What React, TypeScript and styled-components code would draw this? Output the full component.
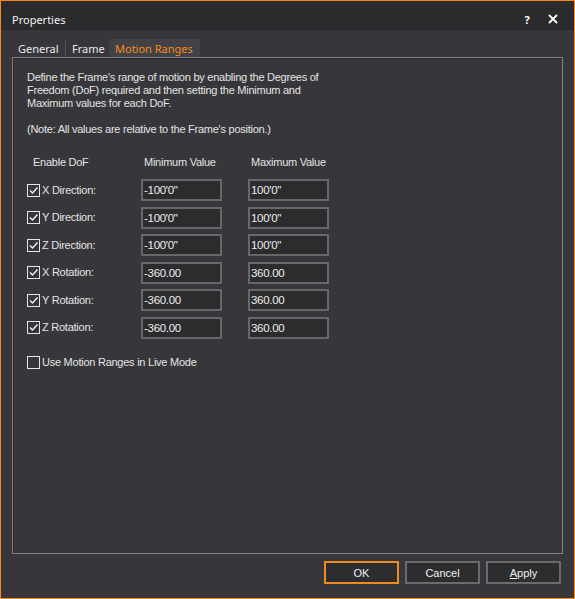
import React, { FC } from 'react';
import styled, { createGlobalStyle } from 'styled-components';

const GlobalStyle = createGlobalStyle`
  html, body {
    margin: 0;
    padding: 0;
    background: #37373b;
  }
  * {
    box-sizing: border-box;
  }
`;

const Window = styled.div`
  width: 575px;
  height: 599px;
  border: 1px solid #f58a1f;
  background: #37373b;
  display: flex;
  flex-direction: column;
  font-family: "Liberation Sans", Arial, sans-serif;
  color: #e4e4e4;
  user-select: none;
`;

const TitleBar = styled.div`
  height: 29px;
  flex: none;
  background: #2b2b2e;
  display: flex;
  align-items: center;
  padding: 7px 8px 0 11px;
  font-family: "Noto Sans", "Open Sans", sans-serif;
  font-size: 11px;
  color: #f2f2f2;
`;

const Title = styled.div`
  flex: 1;
`;

const TitleButton = styled.div`
  width: 26px;
  height: 20px;
  display: flex;
  align-items: center;
  justify-content: center;
  font-weight: bold;
  font-size: 11px;
  color: #ffffff;
`;

const Body = styled.div`
  flex: 1;
  display: flex;
  flex-direction: column;
  padding: 9px 11px 0 11px;
`;

const TabBar = styled.div`
  height: 18px;
  flex: none;
  display: flex;
  align-items: stretch;
  font-family: "Noto Sans", "Open Sans", sans-serif;
  font-size: 11px;
`;

const Tab = styled.div<{ $w: number; $active?: boolean; $sep?: boolean }>`
  width: ${(p) => p.$w}px;
  display: flex;
  align-items: center;
  padding-left: 6px;
  color: ${(p) => (p.$active ? '#f28c1e' : '#e8e8e8')};
  background: ${(p) => (p.$active ? '#414146' : 'transparent')};
  position: relative;
  ${(p) =>
    p.$sep
      ? `&::after {
    content: '';
    position: absolute;
    right: 0;
    top: 2px;
    bottom: 1px;
    width: 1px;
    background: #55555a;
  }`
      : ''}
`;

const Panel = styled.div`
  height: 497px;
  flex: none;
  border: 1px solid #808080;
  box-shadow: inset 1px 1px 0 #2a2a2d;
  padding: 13px 14px 0 14px;
  font-size: 11px;
  line-height: 13px;
  letter-spacing: -0.25px;
`;

const Intro = styled.p`
  margin: 0;
  width: 300px;
`;

const Note = styled.p`
  margin: 13px 0 0 0;
`;

const Grid = styled.div`
  display: grid;
  grid-template-columns: 88px 81px 81px;
  column-gap: 26px;
  row-gap: 5.6px;
  grid-auto-rows: 22px;
  margin-top: 10px;
`;

const HeaderRow = styled.div`
  display: grid;
  grid-template-columns: 88px 81px 81px;
  column-gap: 26px;
  margin-top: 20px;
`;

const HeadCell = styled.div<{ $pad: number }>`
  padding-left: ${(p) => p.$pad}px;
  white-space: nowrap;
`;

const CheckRow = styled.label`
  display: flex;
  align-items: center;
  gap: 2px;
  white-space: nowrap;
`;

const Box = styled.span`
  width: 13px;
  height: 13px;
  flex: none;
  border: 1px solid #e6e6e6;
  display: flex;
  align-items: center;
  justify-content: center;
`;

const Field = styled.div`
  border: 2px solid #68686b;
  background: #2c2c2f;
  color: #ececec;
  padding: 2px 0 0 1px;
  font-size: 11.5px;
  line-height: 15px;
  letter-spacing: -0.3px;
`;

const LiveRow = styled(CheckRow)`
  margin-top: 17px;
`;

const Footer = styled.div`
  display: flex;
  justify-content: flex-end;
  gap: 6px;
  padding: 7px 2px 0 0;
`;

const Button = styled.div<{ $primary?: boolean }>`
  width: 75px;
  height: 23px;
  border: 2px solid ${(p) => (p.$primary ? '#f08a1d' : '#6b6b6e')};
  background: #2d2d30;
  color: #f0f0f0;
  font-size: 11px;
  display: flex;
  align-items: center;
  justify-content: center;
`;

const Check: FC<{ checked: boolean }> = ({ checked }) => (
  <Box>
    {checked && (
      <svg width="11" height="11" viewBox="0 0 11 11">
        <path d="M2 5.5 L4.5 8 L9.5 2.5" fill="none" stroke="#f2f2f2" strokeWidth="1.4" />
      </svg>
    )}
  </Box>
);

const rows = [
  { label: 'X Direction:', min: "-100'0\"", max: "100'0\"" },
  { label: 'Y Direction:', min: "-100'0\"", max: "100'0\"" },
  { label: 'Z Direction:', min: "-100'0\"", max: "100'0\"" },
  { label: 'X Rotation:', min: '-360.00', max: '360.00' },
  { label: 'Y Rotation:', min: '-360.00', max: '360.00' },
  { label: 'Z Rotation:', min: '-360.00', max: '360.00' },
];

const App: FC = () => {
  return (
    <>
      <GlobalStyle />
      <Window>
        <TitleBar>
          <Title>Properties</Title>
          <TitleButton>?</TitleButton>
          <TitleButton>
            <svg width="10" height="10" viewBox="0 0 10 10">
              <path d="M1 1 L9 9 M9 1 L1 9" stroke="#ffffff" strokeWidth="1.8" />
            </svg>
          </TitleButton>
        </TitleBar>
        <Body>
          <TabBar>
            <Tab $w={54} $sep>General</Tab>
            <Tab $w={43}>Frame</Tab>
            <Tab $w={91} $active>Motion Ranges</Tab>
          </TabBar>
          <Panel>
            <Intro>
              Define the Frame's range of motion by enabling the Degrees of Freedom (DoF) required
              and then setting the Minimum and Maximum values for each DoF.
            </Intro>
            <Note>(Note: All values are relative to the Frame's position.)</Note>
            <HeaderRow>
              <HeadCell $pad={6}>Enable DoF</HeadCell>
              <HeadCell $pad={3}>Minimum Value</HeadCell>
              <HeadCell $pad={3}>Maximum Value</HeadCell>
            </HeaderRow>
            <Grid>
              {rows.map((r) => (
                <React.Fragment key={r.label}>
                  <CheckRow>
                    <Check checked />
                    <span>{r.label}</span>
                  </CheckRow>
                  <Field>{r.min}</Field>
                  <Field>{r.max}</Field>
                </React.Fragment>
              ))}
            </Grid>
            <LiveRow>
              <Check checked={false} />
              <span>Use Motion Ranges in Live Mode</span>
            </LiveRow>
          </Panel>
          <Footer>
            <Button $primary>OK</Button>
            <Button>Cancel</Button>
            <Button>
              <span>
                <u>A</u>pply
              </span>
            </Button>
          </Footer>
        </Body>
      </Window>
    </>
  );
};

export default App;
